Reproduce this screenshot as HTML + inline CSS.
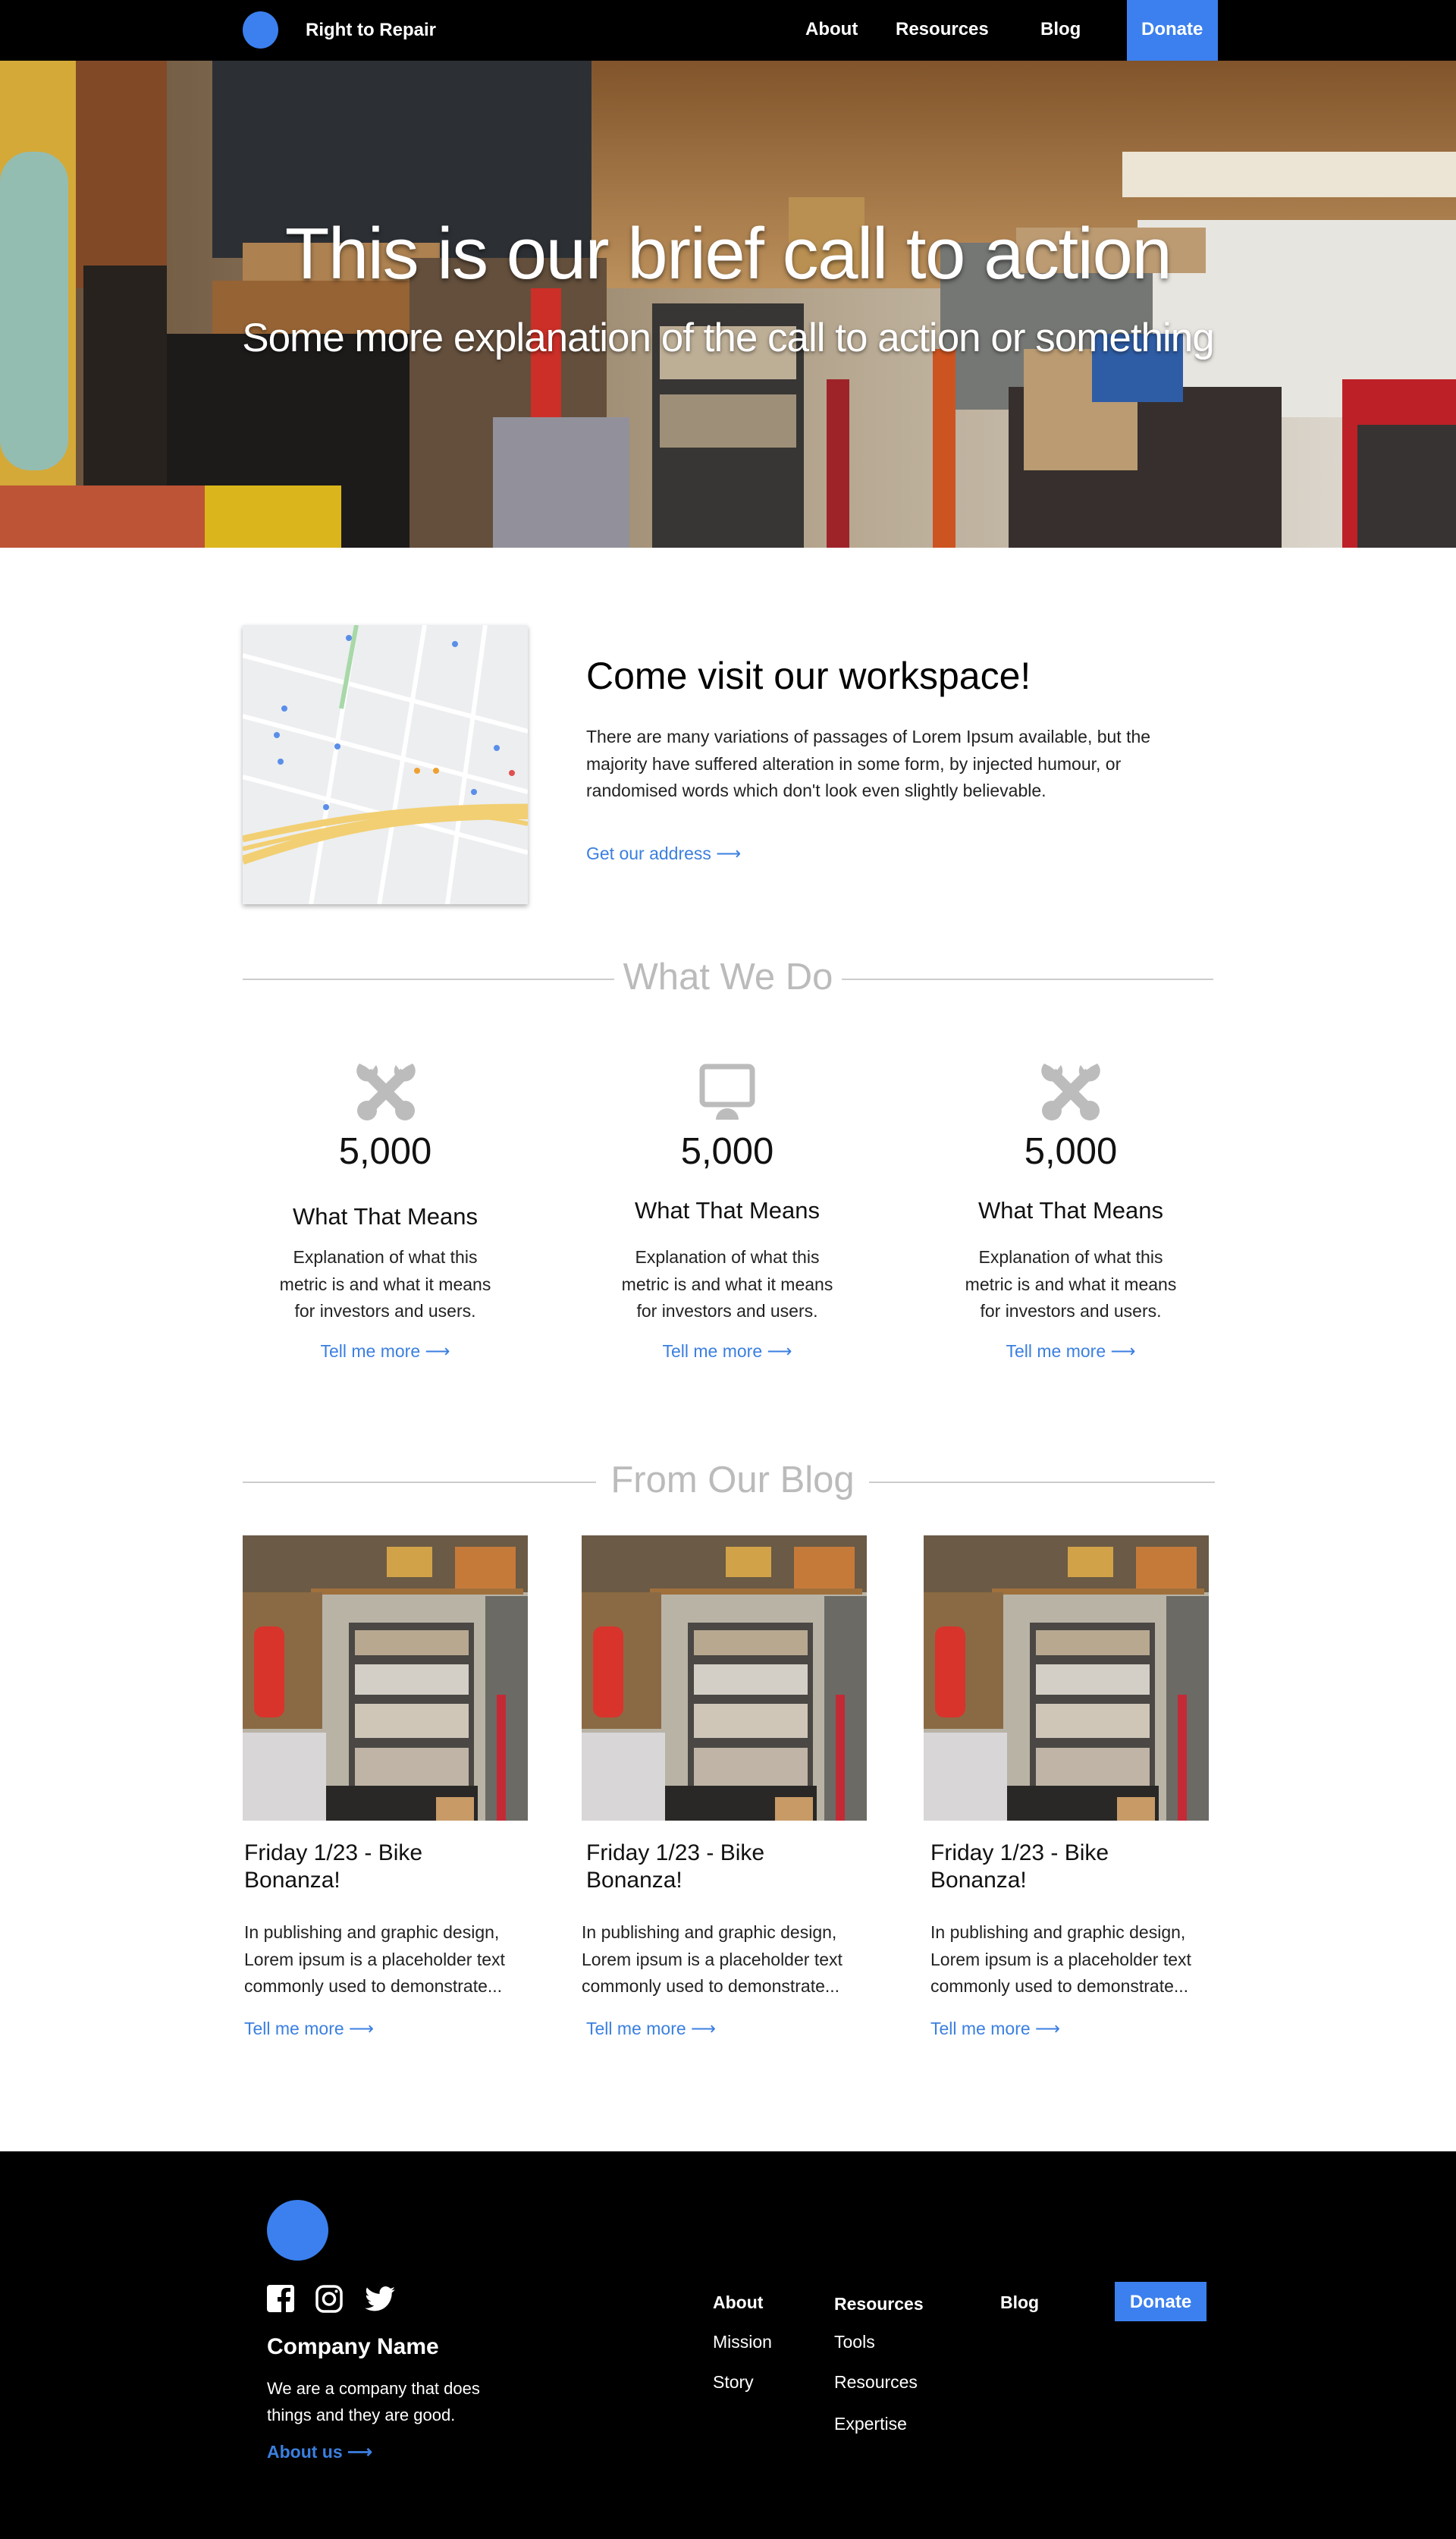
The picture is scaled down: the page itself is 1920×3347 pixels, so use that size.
<!DOCTYPE html>
<html><head><meta charset="utf-8">
<style>
*{margin:0;padding:0;box-sizing:border-box}
body{width:1920px;height:3347px;position:relative;background:#fff;font-family:"Liberation Sans",Arial,sans-serif;color:#111;overflow:hidden}
.a{position:absolute;white-space:nowrap}
.nav{position:absolute;left:0;top:0;width:1920px;height:80px;background:#000}
.w{color:#fff}
.b{font-weight:bold}
.link{color:#3b7fe0;font-size:23px}
.gray{color:#bbb}
.line{position:absolute;height:2px;background:#ccc}
.p{font-size:23px;line-height:35.5px;color:#222}
.c{text-align:center}
</style></head><body>

<div class="nav"></div>
<div class="a" style="left:320px;top:15px;width:47px;height:49px;border-radius:50%;background:#3b80ee"></div>
<div class="a w b" style="left:403px;top:26px;font-size:24px">Right to Repair</div>
<div class="a w b" style="left:1062px;top:25px;font-size:24px">About</div>
<div class="a w b" style="left:1181px;top:25px;font-size:24px">Resources</div>
<div class="a w b" style="left:1372px;top:25px;font-size:24px">Blog</div>
<div class="a" style="left:1486px;top:0;width:120px;height:80px;background:#3b80ee"></div>
<div class="a w b" style="left:1505px;top:25px;font-size:24px">Donate</div>

<!-- HERO -->
<svg class="a" style="left:0;top:80px" width="1920" height="642" viewBox="0 0 1920 642">
<defs>
<linearGradient id="ceil" x1="0" y1="0" x2="0" y2="1"><stop offset="0" stop-color="#8a5a2e"/><stop offset="1" stop-color="#c89a62"/></linearGradient>
<linearGradient id="wall" x1="0" y1="0" x2="1" y2="0"><stop offset="0" stop-color="#6b5137"/><stop offset=".5" stop-color="#b9a78c"/><stop offset="1" stop-color="#f2efe8"/></linearGradient>
</defs>
<rect width="1920" height="642" fill="url(#wall)"/>
<rect x="780" y="0" width="1140" height="300" fill="url(#ceil)"/>
<rect x="1480" y="120" width="440" height="60" fill="#fbf3e2"/>
<rect x="1500" y="210" width="420" height="260" fill="#f6f4ef"/>
<rect x="0" y="0" width="100" height="642" fill="#e2b43c"/>
<rect x="0" y="120" width="90" height="420" rx="40" fill="#9ec9bd"/>
<rect x="100" y="0" width="120" height="300" fill="#8b4e2a"/>
<rect x="110" y="270" width="110" height="372" fill="#2a2520"/>
<rect x="280" y="0" width="500" height="260" fill="#2f3338"/>
<rect x="320" y="240" width="260" height="60" fill="#b88a56"/>
<rect x="280" y="290" width="270" height="80" fill="#a06a38"/>
<rect x="220" y="360" width="320" height="282" fill="#1f1d1c"/>
<rect x="540" y="260" width="260" height="382" fill="#6b5440"/>
<rect x="700" y="300" width="40" height="170" fill="#d8322a"/>
<rect x="860" y="320" width="200" height="322" fill="#3b3a38"/>
<rect x="870" y="350" width="180" height="70" fill="#c9b9a0"/>
<rect x="870" y="440" width="180" height="70" fill="#a89880"/>
<rect x="1040" y="180" width="100" height="100" fill="#c69a58"/>
<rect x="1240" y="240" width="280" height="220" fill="#7d7f7c"/>
<rect x="1340" y="220" width="250" height="60" fill="#c8a57a"/>
<rect x="1330" y="430" width="360" height="212" fill="#3a3230"/>
<rect x="1350" y="380" width="150" height="160" fill="#c6a57a"/>
<rect x="1440" y="360" width="120" height="90" fill="#3263b0"/>
<rect x="1090" y="420" width="30" height="222" fill="#a8262c"/>
<rect x="1230" y="380" width="30" height="262" fill="#d95a22"/>
<rect x="1770" y="420" width="150" height="222" fill="#c9242a"/>
<rect x="1790" y="480" width="130" height="162" fill="#3a3736"/>
<rect x="270" y="560" width="180" height="82" fill="#e8c21e"/>
<rect x="650" y="470" width="180" height="172" fill="#9c9ba5"/>
<rect x="0" y="560" width="270" height="82" fill="#c95a3a"/>
<rect x="0" y="0" width="1920" height="642" fill="#000" opacity=".06"/>
</svg>
<div class="a w c" style="left:0;top:280px;width:1920px;font-size:96px;letter-spacing:-1.5px;text-shadow:0 3px 6px rgba(0,0,0,.5)">This is our brief call to action</div>
<div class="a w c" style="left:0;top:415px;width:1920px;font-size:53px;letter-spacing:-1px;text-shadow:0 2px 5px rgba(0,0,0,.5)">Some more explanation of the call to action or something</div>

<!-- MAP -->
<svg class="a" style="left:320px;top:824px;box-shadow:0 3px 6px rgba(0,0,0,.3)" width="376" height="368" viewBox="0 0 376 368">
<rect width="376" height="368" fill="#eceef0"/>
<g stroke="#fff" stroke-width="6">
<line x1="0" y1="40" x2="376" y2="140"/><line x1="0" y1="120" x2="376" y2="220"/><line x1="0" y1="200" x2="376" y2="300"/>
<line x1="150" y1="0" x2="90" y2="368"/><line x1="240" y1="0" x2="180" y2="368"/><line x1="320" y1="0" x2="270" y2="368"/>
</g>
<path d="M150 0 L130 110" stroke="#a8d8a8" stroke-width="6"/>
<path d="M0 310 C120 270 200 250 376 250" stroke="#f2cf72" stroke-width="12" fill="none"/>
<path d="M0 282 C120 255 220 240 376 240" stroke="#f2cf72" stroke-width="9" fill="none"/>
<path d="M0 295 C150 260 250 235 376 262" stroke="#f2cf72" stroke-width="6" fill="none"/>
<g fill="#5a8ee8"><circle cx="140" cy="17" r="4"/><circle cx="280" cy="25" r="4"/><circle cx="55" cy="110" r="4"/><circle cx="45" cy="145" r="4"/><circle cx="125" cy="160" r="4"/><circle cx="50" cy="180" r="4"/><circle cx="335" cy="162" r="4"/><circle cx="305" cy="220" r="4"/><circle cx="110" cy="240" r="4"/></g>
<g fill="#f0a030"><circle cx="230" cy="192" r="4"/><circle cx="255" cy="192" r="4"/></g>
<circle cx="355" cy="195" r="4" fill="#e05050"/>
</svg>
<div class="a" style="left:773px;top:862px;font-size:50px;color:#000">Come visit our workspace!</div>
<div class="a p" style="left:773px;top:954px">There are many variations of passages of Lorem Ipsum available, but the<br>majority have suffered alteration in some form, by injected humour, or<br>randomised words which don't look even slightly believable.</div>
<div class="a link" style="left:773px;top:1112px">Get our address ⟶</div>

<!-- WHAT WE DO -->
<div class="line" style="left:320px;top:1290px;width:490px"></div>
<div class="line" style="left:1110px;top:1290px;width:490px"></div>
<div class="a gray c" style="left:810px;top:1260px;width:300px;font-size:49px">What We Do</div>

<svg width="0" height="0" style="position:absolute"><defs>
<g id="wr" fill="#bcbcbc">
<path d="M14 14 L64 64" stroke="#bcbcbc" stroke-width="15"/>
<path d="M64 14 L14 64" stroke="#bcbcbc" stroke-width="15"/>
<circle cx="14" cy="64" r="13"/><circle cx="64" cy="64" r="13"/>
<path d="M4 2 A14 14 0 1 0 26 4 L20 12 L12 6 Z"/>
<path d="M74 2 A14 14 0 1 1 52 4 L58 12 L66 6 Z"/>
</g></defs></svg>
<svg class="a" style="left:470px;top:1400px" width="78" height="78" viewBox="0 0 78 78"><use href="#wr"/></svg>
<svg class="a" style="left:922px;top:1402px" width="74" height="74" viewBox="0 0 74 74">
<rect x="4" y="4" width="66" height="50" rx="5" fill="none" stroke="#bcbcbc" stroke-width="7"/>
<path d="M22 74 A15 15 0 0 1 52 74 Z" fill="#bcbcbc"/></svg>
<svg class="a" style="left:1373px;top:1400px" width="78" height="78" viewBox="0 0 78 78"><use href="#wr"/></svg>

<div class="a c" style="left:358px;top:1490px;width:300px;font-size:49px">5,000</div>
<div class="a c" style="left:809px;top:1490px;width:300px;font-size:49px">5,000</div>
<div class="a c" style="left:1262px;top:1490px;width:300px;font-size:49px">5,000</div>
<div class="a c" style="left:358px;top:1586px;width:300px;font-size:31px">What That Means</div>
<div class="a c" style="left:809px;top:1578px;width:300px;font-size:31px">What That Means</div>
<div class="a c" style="left:1262px;top:1578px;width:300px;font-size:31px">What That Means</div>
<div class="a c p" style="left:308px;top:1640px;width:400px">Explanation of what this<br>metric is and what it means<br>for investors and users.</div>
<div class="a c p" style="left:759px;top:1640px;width:400px">Explanation of what this<br>metric is and what it means<br>for investors and users.</div>
<div class="a c p" style="left:1212px;top:1640px;width:400px">Explanation of what this<br>metric is and what it means<br>for investors and users.</div>
<div class="a link c" style="left:358px;top:1768px;width:300px">Tell me more ⟶</div>
<div class="a link c" style="left:809px;top:1768px;width:300px">Tell me more ⟶</div>
<div class="a link c" style="left:1262px;top:1768px;width:300px">Tell me more ⟶</div>

<!-- BLOG -->
<div class="line" style="left:320px;top:1953px;width:466px"></div>
<div class="line" style="left:1146px;top:1953px;width:456px"></div>
<div class="a gray c" style="left:786px;top:1923px;width:360px;font-size:49px">From Our Blog</div>

<svg width="0" height="0" style="position:absolute"><defs>
<g id="shelf">
<rect width="376" height="376" fill="#b9b3a6"/>
<rect x="0" y="0" width="376" height="75" fill="#6b5a45"/>
<rect x="280" y="15" width="80" height="55" fill="#c67a3a"/>
<rect x="190" y="15" width="60" height="40" fill="#d2a248"/>
<rect x="90" y="70" width="280" height="8" fill="#a0703c"/>
<rect x="0" y="75" width="105" height="180" fill="#8a6a44"/>
<rect x="15" y="120" width="40" height="120" rx="12" fill="#d8342c"/>
<rect x="140" y="115" width="165" height="270" fill="#4a4744"/>
<rect x="148" y="125" width="150" height="33" fill="#b8a890"/>
<rect x="148" y="170" width="150" height="40" fill="#d4cfc6"/>
<rect x="148" y="222" width="150" height="45" fill="#cfc6b8"/>
<rect x="148" y="280" width="150" height="50" fill="#bfb4a6"/>
<rect x="0" y="260" width="110" height="116" fill="#d9d6d8"/>
<rect x="320" y="80" width="56" height="296" fill="#6c6a64"/>
<rect x="335" y="210" width="12" height="166" fill="#c42a36"/>
<rect x="110" y="330" width="200" height="46" fill="#2a2826"/>
<rect x="255" y="345" width="50" height="31" fill="#c89a66"/>
</g></defs></svg>
<svg class="a" style="left:320px;top:2024px" width="376" height="376"><use href="#shelf"/></svg>
<svg class="a" style="left:767px;top:2024px" width="376" height="376"><use href="#shelf"/></svg>
<svg class="a" style="left:1218px;top:2024px" width="376" height="376"><use href="#shelf"/></svg>

<div class="a" style="left:322px;top:2425px;font-size:30px;line-height:36px">Friday 1/23 - Bike<br>Bonanza!</div>
<div class="a" style="left:773px;top:2425px;font-size:30px;line-height:36px">Friday 1/23 - Bike<br>Bonanza!</div>
<div class="a" style="left:1227px;top:2425px;font-size:30px;line-height:36px">Friday 1/23 - Bike<br>Bonanza!</div>
<div class="a p" style="left:322px;top:2530px">In publishing and graphic design,<br>Lorem ipsum is a placeholder text<br>commonly used to demonstrate...</div>
<div class="a p" style="left:767px;top:2530px">In publishing and graphic design,<br>Lorem ipsum is a placeholder text<br>commonly used to demonstrate...</div>
<div class="a p" style="left:1227px;top:2530px">In publishing and graphic design,<br>Lorem ipsum is a placeholder text<br>commonly used to demonstrate...</div>
<div class="a link" style="left:322px;top:2661px">Tell me more ⟶</div>
<div class="a link" style="left:773px;top:2661px">Tell me more ⟶</div>
<div class="a link" style="left:1227px;top:2661px">Tell me more ⟶</div>

<!-- FOOTER -->
<div class="a" style="left:0;top:2836px;width:1920px;height:511px;background:#000"></div>
<div class="a" style="left:352px;top:2900px;width:81px;height:80px;border-radius:50%;background:#3b80ee"></div>
<svg class="a" style="left:352px;top:3012px" width="36" height="36" viewBox="0 0 36 36">
<rect width="36" height="36" rx="4" fill="#fff"/>
<path d="M25 36 V22 H30 L31 16 H25 V12 C25 10 26 9 28 9 H31 V4 C30 4 28 4 26 4 C21 4 19 7 19 11 V16 H14 V22 H19 V36 Z" fill="#000"/></svg>
<svg class="a" style="left:416px;top:3012px" width="36" height="37" viewBox="0 0 36 37">
<rect x="2" y="2" width="32" height="33" rx="9" fill="none" stroke="#fff" stroke-width="3.5"/>
<circle cx="18" cy="18.5" r="7.5" fill="none" stroke="#fff" stroke-width="3.5"/>
<circle cx="27.5" cy="8.5" r="2" fill="#fff"/></svg>
<svg class="a" style="left:481px;top:3014px" width="40" height="33" viewBox="0 0 24 20">
<path fill="#fff" d="M24 2.4c-.9.4-1.8.7-2.8.8 1-.6 1.8-1.600 2.2-2.7-1 .6-2 1-3.1 1.2C19.3.7 18 0 16.6 0c-2.7 0-4.9 2.2-4.9 4.9 0 .4 0 .8.1 1.1C7.7 5.8 4.1 3.9 1.7.9c-.4.7-.7 1.6-.7 2.5 0 1.7.9 3.2 2.2 4.1-.8 0-1.6-.2-2.200-.6v.1c0 2.4 1.7 4.4 3.9 4.8-.4.1-.8.2-1.3.2-.3 0-.6 0-.9-.1.6 2 2.4 3.4 4.6 3.4-1.7 1.3-3.8 2.1-6.1 2.1-.4 0-.8 0-1.2-.1C2.2 18.8 4.8 19.600 7.5 19.6c9.1 0 14-7.5 14-14v-.6c1-.7 1.8-1.6 2.5-2.6z"/></svg>
<div class="a w b" style="left:352px;top:3077px;font-size:30px">Company Name</div>
<div class="a w" style="left:352px;top:3131px;font-size:22px;line-height:35px">We are a company that does<br>things and they are good.</div>
<div class="a link b" style="left:352px;top:3219px;font-size:23px">About us ⟶</div>

<div class="a w b" style="left:940px;top:3022px;font-size:23px">About</div>
<div class="a w b" style="left:1100px;top:3024px;font-size:23px">Resources</div>
<div class="a w b" style="left:1319px;top:3022px;font-size:23px">Blog</div>
<div class="a" style="left:1470px;top:3008px;width:121px;height:52px;background:#3b80ee"></div>
<div class="a w b c" style="left:1470px;top:3021px;width:121px;font-size:24px">Donate</div>
<div class="a w" style="left:940px;top:3074px;font-size:23px">Mission</div>
<div class="a w" style="left:940px;top:3127px;font-size:23px">Story</div>
<div class="a w" style="left:1100px;top:3074px;font-size:23px">Tools</div>
<div class="a w" style="left:1100px;top:3127px;font-size:23px">Resources</div>
<div class="a w" style="left:1100px;top:3182px;font-size:23px">Expertise</div>
</body></html>
